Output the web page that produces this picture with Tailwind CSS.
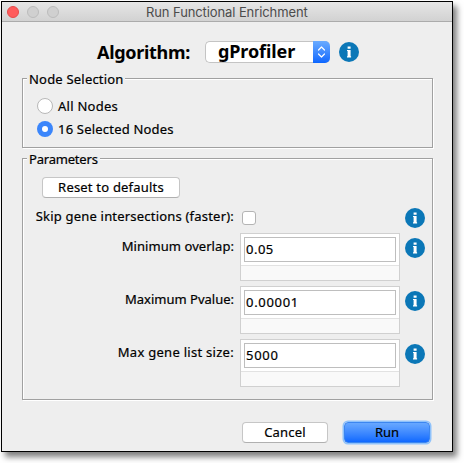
<!DOCTYPE html>
<html lang="en">
<head>
<meta charset="utf-8">
<title>Run Functional Enrichment</title>
<script src="https://cdn.jsdelivr.net/npm/@tailwindcss/browser@4"></script>
</head>
<body class="w-[464px] h-[463px] overflow-hidden bg-white pt-px pl-px font-['Noto_Sans',sans-serif] text-[13px] leading-4 text-black [-webkit-text-stroke:0.2px_black]">
<svg class="hidden"><symbol id="info" viewBox="0 0 20 20"><circle cx="10" cy="10" r="10" fill="#0b77b7"/><path d="M8.6 4.5h3v2.3h-3zM8 7.9h3.6v6.4h.5v1.2H8v-1.2h.6V9.1H8z" fill="#fff"/></symbol></svg>
<main class="w-[452px] h-[451px] border border-black bg-[#eeeeee] shadow-[4px_5px_6px_rgba(0,0,0,0.5)] flex flex-col">
  <header class="h-5 shrink-0 flex items-center bg-gradient-to-b from-[#e6e6e6] to-[#d2d2d2] border-b border-[#ababab] pl-[5px]">
    <div class="flex gap-2">
      <i class="size-3 rounded-full bg-[#ff5c5c] border border-[#e64b4b]"></i>
      <i class="size-3 rounded-full bg-[#d0d0d0] border border-[#bcbcbc]"></i>
      <i class="size-3 rounded-full bg-[#d0d0d0] border border-[#bcbcbc]"></i>
    </div>
    <h1 class="ml-[87px] whitespace-nowrap font-[Inter,sans-serif] text-[13px] tracking-[-0.1px] text-[#4c4c4c] [-webkit-text-stroke:0]">Run Functional Enrichment</h1>
  </header>
  <div class="h-[56px] shrink-0 pt-[19px] pl-[95px] flex items-start font-bold text-[18px] leading-[22px] [-webkit-text-stroke:0]">
    <span class="w-[108px] whitespace-nowrap tracking-[-0.3px]">Algorithm:</span>
    <div class="w-[125px] h-[22px] bg-white rounded-[5px] border border-[#c4c4c4] border-r-0 flex">
      <span class="flex-1 pl-3 leading-[18px] whitespace-nowrap tracking-[-0.1px]">gProfiler</span>
      <svg class="-my-px w-[17px] h-[22px] shrink-0 rounded-r-[5px] bg-gradient-to-b from-[#6aabff] to-[#0a66ff]" viewBox="0 0 17 22" fill="none" stroke="#fff" stroke-width="1.2" stroke-linecap="round" stroke-linejoin="round"><path d="M5.5 9l3-3 3 3M5.5 13l3 3 3-3"/></svg>
    </div>
    <svg class="size-5 ml-[9px] mt-px"><use href="#info"/></svg>
  </div>
  <section class="ml-5 w-[411px] h-[70px] shrink-0 border border-[#a0a0a0] shadow-[1px_1px_white,inset_1px_1px_white]">
    <h2 class="-mt-2 ml-1 w-[98px] h-4 pl-[2px] bg-[#eeeeee] whitespace-nowrap tracking-[0.2px]">Node Selection</h2>
    <div class="mt-[11px] ml-[14px] flex flex-col gap-[7px]">
      <label class="flex items-center h-4 gap-[5px] tracking-[0.25px]"><i class="size-4 rounded-full bg-white border border-[#b8b8b8]"></i><span>All Nodes</span></label>
      <label class="flex items-center h-4 gap-[5px] tracking-[0.2px]"><i class="size-4 rounded-full bg-[#3b86fb] flex items-center justify-center"><b class="size-[6px] rounded-full bg-white"></b></i><span>16 Selected Nodes</span></label>
    </div>
  </section>
  <section class="mt-[10px] ml-5 w-[411px] h-[242px] shrink-0 border border-[#a0a0a0] shadow-[1px_1px_white,inset_1px_1px_white]">
    <h2 class="-mt-2 ml-1 w-[73px] h-4 pl-[2px] bg-[#eeeeee] whitespace-nowrap tracking-[-0.2px]">Parameters</h2>
    <button class="mt-[10px] ml-[19px] w-[138px] h-[21px] flex items-center justify-center bg-white rounded-[4px] border border-[#c6c6c6] border-b-[#b0b0b0] pb-px whitespace-nowrap tracking-[0.2px]">Reset to defaults</button>
    <div class="mt-[10px] h-5 flex">
      <span class="w-[211px] flex justify-end whitespace-nowrap tracking-[0.2px]">Skip gene intersections (faster):</span>
      <i class="ml-[8px] mt-[3px] size-[14px] rounded-[3px] bg-white border border-[#b4b4b4]"></i>
      <svg class="size-5 ml-[149px]"><use href="#info"/></svg>
    </div>
    <div class="mt-[5px] flex flex-col gap-[5px]">
      <div class="h-12 flex">
        <span class="w-[211px] pt-[5px] text-right whitespace-nowrap tracking-[0.06px]">Minimum overlap:</span>
        <div class="ml-[6px] w-40 h-12 border border-[#d0d0d0] bg-[#f9f9f9]"><div class="h-[32px] bg-white border-b border-[#e2e2e2] p-[3px]"><div class="w-[152px] h-[25px] border border-[#bebebe] pl-px leading-[23px] tracking-[0.5px]">0.05</div></div></div>
        <svg class="size-5 ml-[5px] mt-[5px]"><use href="#info"/></svg>
      </div>
      <div class="h-12 flex">
        <span class="w-[211px] pt-[5px] text-right whitespace-nowrap">Maximum Pvalue:</span>
        <div class="ml-[6px] w-40 h-12 border border-[#d0d0d0] bg-[#f9f9f9]"><div class="h-[32px] bg-white border-b border-[#e2e2e2] p-[3px]"><div class="w-[152px] h-[25px] border border-[#bebebe] pl-px leading-[23px] tracking-[0.7px]">0.00001</div></div></div>
        <svg class="size-5 ml-[5px] mt-[5px]"><use href="#info"/></svg>
      </div>
      <div class="h-12 flex">
        <span class="w-[211px] pt-[5px] text-right whitespace-nowrap tracking-[0.28px]">Max gene list size:</span>
        <div class="ml-[6px] w-40 h-12 border border-[#d0d0d0] bg-[#f9f9f9]"><div class="h-[32px] bg-white border-b border-[#e2e2e2] p-[3px]"><div class="w-[152px] h-[25px] border border-[#bebebe] pl-px leading-[23px] tracking-[0.7px]">5000</div></div></div>
        <svg class="size-5 ml-[5px] mt-[5px]"><use href="#info"/></svg>
      </div>
    </div>
  </section>
  <footer class="mt-[22px] pl-[240px] flex gap-4">
    <button class="w-[86px] h-[21px] flex items-center justify-center bg-white rounded-[4px] border border-[#c6c6c6] border-b-[#b0b0b0] pb-px tracking-[0.2px]">Cancel</button>
    <button class="w-[86px] h-[21px] flex items-center justify-center rounded-[4px] bg-gradient-to-b from-[#68a8ff] to-[#0d68ff] border border-[#3c86f0] pb-px shadow-[0_0_0_1.5px_#8fc2fb]">Run</button>
  </footer>
</main>
</body>
</html>
